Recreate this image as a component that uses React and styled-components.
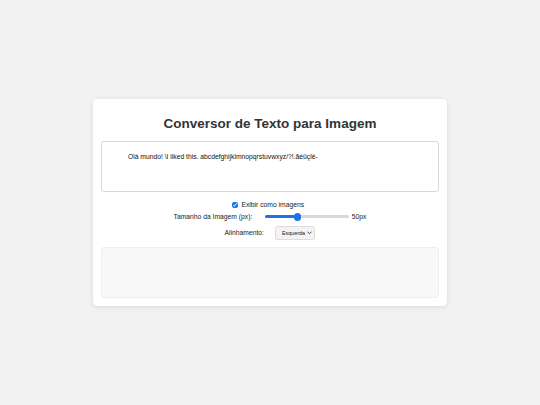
import React, { useState } from 'react';
import styled, { createGlobalStyle } from 'styled-components';

const GlobalStyle = createGlobalStyle`
  html, body {
    margin: 0;
    padding: 0;
  }
  body {
    background: #f2f2f2;
    font-family: "Liberation Sans", Arial, Helvetica, sans-serif;
    color: #333;
  }
`;

const Page = styled.div`
  min-height: 100vh;
  display: flex;
  align-items: center;
  justify-content: center;
`;

const Card = styled.div`
  width: 354px;
  box-sizing: border-box;
  padding: 8.4px;
  background: #fff;
  border-radius: 4.5px;
  box-shadow: 0 1px 5px rgba(0, 0, 0, 0.1);
`;

const Title = styled.h1`
  margin: 9px 0;
  font-size: 13.5px;
  line-height: 15.5px;
  font-weight: bold;
  text-align: center;
  color: #333;
`;

const TextInput = styled.textarea`
  display: block;
  width: 100%;
  height: 51px;
  box-sizing: border-box;
  margin: 0;
  padding: 11px 6px 6px 25.5px;
  border: 1px solid #d9d9d9;
  border-radius: 2.8px;
  resize: none;
  font-family: "Liberation Sans", Arial, sans-serif;
  font-size: 6.75px;
  line-height: 7.8px;
  color: #111;
  outline: none;
`;

const Controls = styled.div`
  display: flex;
  flex-direction: column;
  align-items: center;
  margin: 8.5px 0 7px;
`;

const Row = styled.div`
  display: flex;
  align-items: center;
  justify-content: center;
  height: ${p => p.$h}px;
  margin-bottom: ${p => p.$mb || 0}px;
  font-size: 6.75px;
  color: #222;
`;

const Check = styled.input`
  width: 6.5px;
  height: 6.5px;
  margin: 0 3px 0 0;
  accent-color: #1a73e8;
`;

const Label = styled.label`
  margin-right: ${p => p.$mr || 0}px;
  white-space: nowrap;
`;

const Range = styled.input`
  -webkit-appearance: none;
  appearance: none;
  width: 84px;
  height: 9px;
  margin: 0;
  background: transparent;

  &::-webkit-slider-runnable-track {
    height: 3px;
    border-radius: 2px;
    background: linear-gradient(to right, #1a73e8 var(--fill), #d9d9d9 var(--fill));
  }
  &::-webkit-slider-thumb {
    -webkit-appearance: none;
    width: 7.5px;
    height: 7.5px;
    margin-top: -2.25px;
    border-radius: 50%;
    background: #1a73e8;
    border: none;
  }
`;

const Value = styled.span`
  margin-left: 3px;
`;

const SelectWrap = styled.div`
  position: relative;
  display: inline-flex;
`;

const Select = styled.select`
  -webkit-appearance: none;
  appearance: none;
  width: 40px;
  height: 14px;
  box-sizing: border-box;
  margin: 0;
  padding: 0 8px 0 5.5px;
  border: 1px solid #dcdcdc;
  border-radius: 2.5px;
  background: #f3f3f3;
  font-family: "Liberation Sans", Arial, sans-serif;
  font-size: 5.4px;
  color: #222;
  outline: none;
`;

const Chevron = styled.svg`
  position: absolute;
  right: 3px;
  top: 5px;
  width: 5px;
  height: 4px;
  pointer-events: none;
`;

const Output = styled.div`
  height: 51px;
  box-sizing: border-box;
  background: #f8f8f8;
  border: 1px solid #eee;
  border-radius: 2.8px;
`;

export default function App() {
  const [text, setText] = useState('Olá mundo! \\I liked this. abcdefghijklmnopqrstuvwxyz/?!.ãéüçlé-');
  const [asImages, setAsImages] = useState(true);
  const [size, setSize] = useState(50);
  const [align, setAlign] = useState('left');
  const min = 20, max = 100;
  const fill = ((size - min) / (max - min)) * 100;

  return (
    <>
      <GlobalStyle />
      <Page>
        <Card>
          <Title>Conversor de Texto para Imagem</Title>
          <TextInput value={text} onChange={e => setText(e.target.value)} />
          <Controls>
            <Row $h={9} $mb={3}>
              <Check type="checkbox" checked={asImages} onChange={e => setAsImages(e.target.checked)} />
              <Label $mr={4}>Exibir como imagens</Label>
            </Row>
            <Row $h={9} $mb={4.5}>
              <Label $mr={12.5}>Tamanho da Imagem (px):</Label>
              <Range
                type="range"
                min={min}
                max={max}
                value={size}
                onChange={e => setSize(Number(e.target.value))}
                style={{ '--fill': `${fill}%` }}
              />
              <Value>{size}px</Value>
            </Row>
            <Row $h={14}>
              <Label $mr={11.5}>Alinhamento:</Label>
              <SelectWrap>
                <Select value={align} onChange={e => setAlign(e.target.value)}>
                  <option value="left">Esquerda</option>
                  <option value="center">Centro</option>
                  <option value="right">Direita</option>
                </Select>
                <Chevron viewBox="0 0 10 8">
                  <path d="M1.5 2 L5 5.5 L8.5 2" fill="none" stroke="#333" strokeWidth="1.8" strokeLinecap="round" strokeLinejoin="round" />
                </Chevron>
              </SelectWrap>
            </Row>
          </Controls>
          <Output />
        </Card>
      </Page>
    </>
  );
}
